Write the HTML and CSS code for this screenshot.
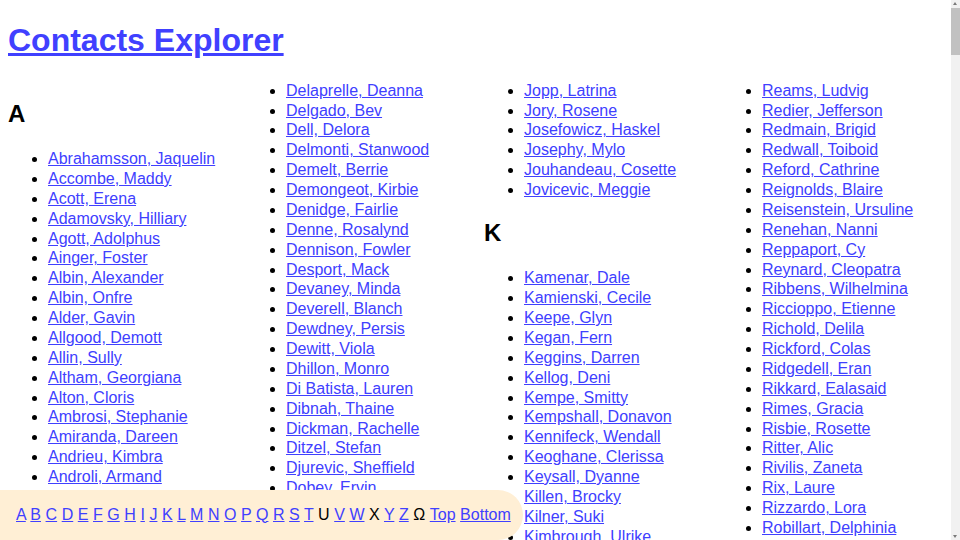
FILE: index.html
```html
<!DOCTYPE html>
<html lang="en">
<head>
<meta charset="utf-8">
<title>Contacts Explorer</title>
<link rel="stylesheet" href="styles.css">
</head>
<body>
<h1 id="top"><a href="#top">Contacts Explorer</a></h1>
<main class="columns">
  <div class="col">
    <h2 id="A">A</h2>
    <ul>
      <li><a href="#">Abrahamsson, Jaquelin</a></li>
      <li><a href="#">Accombe, Maddy</a></li>
      <li><a href="#">Acott, Erena</a></li>
      <li><a href="#">Adamovsky, Hilliary</a></li>
      <li><a href="#">Agott, Adolphus</a></li>
      <li><a href="#">Ainger, Foster</a></li>
      <li><a href="#">Albin, Alexander</a></li>
      <li><a href="#">Albin, Onfre</a></li>
      <li><a href="#">Alder, Gavin</a></li>
      <li><a href="#">Allgood, Demott</a></li>
      <li><a href="#">Allin, Sully</a></li>
      <li><a href="#">Altham, Georgiana</a></li>
      <li><a href="#">Alton, Cloris</a></li>
      <li><a href="#">Ambrosi, Stephanie</a></li>
      <li><a href="#">Amiranda, Dareen</a></li>
      <li><a href="#">Andrieu, Kimbra</a></li>
      <li><a href="#">Androli, Armand</a></li>
      <li><a href="#">Angell, Tobi</a></li>
      <li><a href="#">Annand, Kerwin</a></li>
      <li><a href="#">Antcliff, Merle</a></li>
    </ul>
  </div>
  <div class="col">
    <ul class="cont">
      <li><a href="#">Delaprelle, Deanna</a></li>
      <li><a href="#">Delgado, Bev</a></li>
      <li><a href="#">Dell, Delora</a></li>
      <li><a href="#">Delmonti, Stanwood</a></li>
      <li><a href="#">Demelt, Berrie</a></li>
      <li><a href="#">Demongeot, Kirbie</a></li>
      <li><a href="#">Denidge, Fairlie</a></li>
      <li><a href="#">Denne, Rosalynd</a></li>
      <li><a href="#">Dennison, Fowler</a></li>
      <li><a href="#">Desport, Mack</a></li>
      <li><a href="#">Devaney, Minda</a></li>
      <li><a href="#">Deverell, Blanch</a></li>
      <li><a href="#">Dewdney, Persis</a></li>
      <li><a href="#">Dewitt, Viola</a></li>
      <li><a href="#">Dhillon, Monro</a></li>
      <li><a href="#">Di Batista, Lauren</a></li>
      <li><a href="#">Dibnah, Thaine</a></li>
      <li><a href="#">Dickman, Rachelle</a></li>
      <li><a href="#">Ditzel, Stefan</a></li>
      <li><a href="#">Djurevic, Sheffield</a></li>
      <li><a href="#">Dobey, Ervin</a></li>
      <li><a href="#">Dodsley, Karel</a></li>
      <li><a href="#">Dollin, Aurea</a></li>
    </ul>
  </div>
  <div class="col">
    <ul class="cont">
      <li><a href="#">Jopp, Latrina</a></li>
      <li><a href="#">Jory, Rosene</a></li>
      <li><a href="#">Josefowicz, Haskel</a></li>
      <li><a href="#">Josephy, Mylo</a></li>
      <li><a href="#">Jouhandeau, Cosette</a></li>
      <li><a href="#">Jovicevic, Meggie</a></li>
    </ul>
    <h2 id="K">K</h2>
    <ul>
      <li><a href="#">Kamenar, Dale</a></li>
      <li><a href="#">Kamienski, Cecile</a></li>
      <li><a href="#">Keepe, Glyn</a></li>
      <li><a href="#">Kegan, Fern</a></li>
      <li><a href="#">Keggins, Darren</a></li>
      <li><a href="#">Kellog, Deni</a></li>
      <li><a href="#">Kempe, Smitty</a></li>
      <li><a href="#">Kempshall, Donavon</a></li>
      <li><a href="#">Kennifeck, Wendall</a></li>
      <li><a href="#">Keoghane, Clerissa</a></li>
      <li><a href="#">Keysall, Dyanne</a></li>
      <li><a href="#">Killen, Brocky</a></li>
      <li><a href="#">Kilner, Suki</a></li>
      <li><a href="#">Kimbrough, Ulrike</a></li>
      <li><a href="#">Kinchley, Ronda</a></li>
    </ul>
  </div>
  <div class="col">
    <ul class="cont">
      <li><a href="#">Reams, Ludvig</a></li>
      <li><a href="#">Redier, Jefferson</a></li>
      <li><a href="#">Redmain, Brigid</a></li>
      <li><a href="#">Redwall, Toiboid</a></li>
      <li><a href="#">Reford, Cathrine</a></li>
      <li><a href="#">Reignolds, Blaire</a></li>
      <li><a href="#">Reisenstein, Ursuline</a></li>
      <li><a href="#">Renehan, Nanni</a></li>
      <li><a href="#">Reppaport, Cy</a></li>
      <li><a href="#">Reynard, Cleopatra</a></li>
      <li><a href="#">Ribbens, Wilhelmina</a></li>
      <li><a href="#">Riccioppo, Etienne</a></li>
      <li><a href="#">Richold, Delila</a></li>
      <li><a href="#">Rickford, Colas</a></li>
      <li><a href="#">Ridgedell, Eran</a></li>
      <li><a href="#">Rikkard, Ealasaid</a></li>
      <li><a href="#">Rimes, Gracia</a></li>
      <li><a href="#">Risbie, Rosette</a></li>
      <li><a href="#">Ritter, Alic</a></li>
      <li><a href="#">Rivilis, Zaneta</a></li>
      <li><a href="#">Rix, Laure</a></li>
      <li><a href="#">Rizzardo, Lora</a></li>
      <li><a href="#">Robillart, Delphinia</a></li>
      <li><a href="#">Robins, Hedda</a></li>
    </ul>
  </div>
</main>
<nav class="alpha">
  <a href="#A">A</a> <a href="#">B</a> <a href="#">C</a> <a href="#">D</a> <a href="#">E</a> <a href="#">F</a> <a href="#">G</a> <a href="#">H</a> <a href="#">I</a> <a href="#">J</a> <a href="#K">K</a> <a href="#">L</a> <a href="#">M</a> <a href="#">N</a> <a href="#">O</a> <a href="#">P</a> <a href="#">Q</a> <a href="#">R</a> <a href="#">S</a> <a href="#">T</a> <span>U</span> <a href="#">V</a> <a href="#">W</a> <span>X</span> <a href="#">Y</a> <a href="#">Z</a> <span>Ω</span> <a href="#top">Top</a> <a href="#bottom">Bottom</a>
</nav>
<div class="scrollbar" aria-hidden="true">
  <span class="sb-arrow sb-up"></span>
  <span class="sb-thumb"></span>
  <span class="sb-arrow sb-down"></span>
</div>
<div id="bottom"></div>
</body>
</html>
```
FILE: styles.css
```css
body {
  margin: 0 8px 8px;
  font-family: "Liberation Sans", Arial, sans-serif;
  font-size: 16px;
  color: #000;
  background: #fff;
}

a {
  color: #4040ff;
}

h1 {
  font-size: 32px;
  line-height: 36.8px;
  margin: 0;
  padding: 22.44px 0 21.44px;
}

.columns {
  display: grid;
  grid-template-columns: repeat(4, 215px);
  column-gap: 23px;
  align-items: start;
  min-height: 5700px;
}

.col h2 {
  font-size: 24px;
  line-height: 27.6px;
  margin: 18.92px 0 21.92px;
}

.col ul {
  margin: 16px 0;
  padding-left: 40px;
}

.col ul.cont {
  margin-top: 0;
}

.col li {
  line-height: 19.87px;
  white-space: nowrap;
}

.alpha {
  position: fixed;
  left: 0;
  bottom: 0;
  padding: 16px 12px 16px 16px;
  background: #ffefd5;
  border-radius: 0 25px 25px 0;
  line-height: 18.4px;
  word-spacing: 0.1px;
}

.scrollbar {
  position: fixed;
  top: 0;
  right: 0;
  bottom: 0;
  width: 9px;
  background: #f1f1f1;
}

.sb-thumb {
  position: absolute;
  top: 8px;
  left: 0;
  width: 9px;
  height: 47px;
  background: #c1c1c1;
}

.sb-arrow {
  position: absolute;
  left: 2px;
  width: 0;
  height: 0;
  border-left: 2.5px solid transparent;
  border-right: 2.5px solid transparent;
}

.sb-up {
  top: 2px;
  border-bottom: 3px solid #7a7a7a;
}

.sb-down {
  bottom: 2px;
  border-top: 3px solid #7a7a7a;
}
```
